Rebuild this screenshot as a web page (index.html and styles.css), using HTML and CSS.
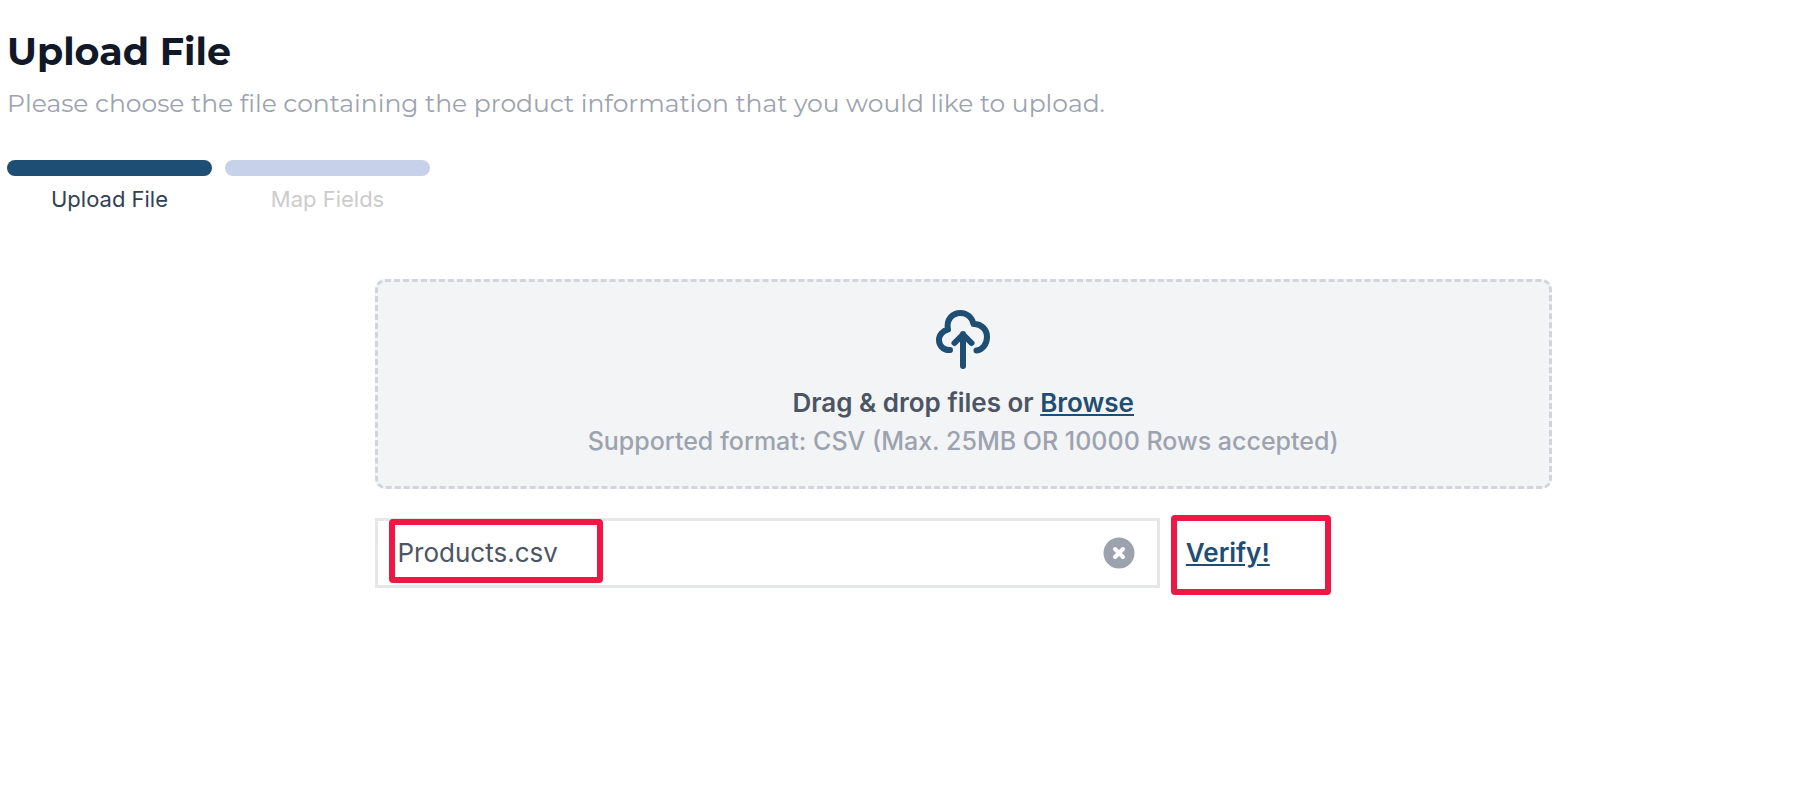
FILE: index.html
```html
<!DOCTYPE html>
<html lang="en">
<head>
    <meta charset="UTF-8">
    <meta name="viewport" content="width=device-width, initial-scale=1.0">
    <title>Upload File</title>
    <link rel="stylesheet" href="styles.css">
</head>
<body>
    <header>
        <h1>Upload File</h1>
        <p class="subtitle">Please choose the file containing the product information that you would like to upload.</p>
    </header>

    <!-- Progress steps -->
    <ol class="steps">
        <li class="step active">Upload File</li>
        <li class="step">Map Fields</li>
    </ol>

    <main class="upload">
        <div class="dropzone">
            <svg class="cloud-icon" viewBox="0 0 54 60" fill="none" stroke="currentColor" stroke-width="6" stroke-linecap="round" stroke-linejoin="round" aria-hidden="true">
                <path d="M14 40C8 40.500 3 36 3 30C3 25 7 20.500 12 19.500C10 10 16 3 24.500 3C31 3 36 7.500 37.500 14C45 13.500 51 19.500 51 27C51 34.500 46 40 40.500 40.500"/>
                <path d="M27 56V24M18.500 33L27 24.500L35.500 33"/>
            </svg>
            <p class="drop-text">Drag &amp; drop files or <a href="#">Browse</a></p>
            <p class="drop-hint">Supported format: CSV (Max. 25MB OR 10000 Rows accepted)</p>
        </div>

        <!-- Selected file -->
        <div class="file-row">
            <div class="file-box">
                <span class="file-name marked">Products.csv</span>
                <button class="clear-btn" type="button" aria-label="Remove file">
                    <svg viewBox="0 0 32 32" aria-hidden="true">
                        <circle cx="16" cy="16" r="15.500" fill="#9ca3af"/>
                        <path d="M12 12L20 20M20 12L12 20" stroke="#fff" stroke-width="4" stroke-linecap="round"/>
                    </svg>
                </button>
            </div>
            <a class="verify-link marked" href="#">Verify!</a>
        </div>
    </main>
</body>
</html>
```

FILE: styles.css
```css
*, *::before, *::after {
    box-sizing: border-box;
}
body {
    margin: 0;
    padding: 26px 7px;
    background-color: #fff;
    font-family: Inter, sans-serif;
    font-size: 26px;
    line-height: 39px;
    color: #4b5563;
}
h1 {
    margin: 0;
    font-family: Montserrat, Inter, sans-serif;
    font-size: 38px;
    font-weight: 700;
    line-height: 52px;
    color: #111827;
}
p {
    margin: 0;
}
a {
    color: #1f4e74;
}
.subtitle {
    margin-top: 6px;
    font-family: Montserrat, Inter, sans-serif;
    font-size: 25px;
    font-weight: 400;
    color: #9ca3af;
}
.steps {
    display: flex;
    gap: 13px;
    margin: 37px 0 0;
    padding: 0;
    list-style: none;
}
.step {
    width: 205px;
    font-size: 22px;
    line-height: 32px;
    text-align: center;
    color: #ccc;
}
.step::before {
    content: "";
    display: block;
    height: 16px;
    margin-bottom: 7px;
    border-radius: 8px;
    background-color: #c7d2ea;
}
.step.active {
    color: #334155;
}
.step.active::before {
    background-color: #1f4e74;
}
.upload {
    width: 66%;
    margin: 64px 0 0 20.6%;
}
.dropzone {
    padding: 28px 20px 25px;
    border: 3px dashed #d1d5db;
    border-radius: 10px;
    background-color: #f3f4f6;
    text-align: center;
}
.cloud-icon {
    display: block;
    width: 54px;
    height: 60px;
    margin: 0 auto 13px;
    color: #1f4e74;
}
.drop-text {
    font-weight: 600;
}
.drop-hint {
    font-size: 25px;
    font-weight: 500;
    color: #9ca3af;
}
.file-row {
    display: flex;
    align-items: center;
    gap: 26px;
    margin-top: 29px;
}
.file-box {
    display: flex;
    justify-content: space-between;
    align-items: center;
    width: 66.7%;
    height: 70px;
    padding: 0 22px 0 20px;
    border: 3px solid #e5e7eb;
}
/* Red outline drawn around the highlighted items */
.marked {
    position: relative;
    line-height: 32px;
}
.marked::after {
    content: "";
    position: absolute;
    border: 6px solid #ee1844;
    border-radius: 4px;
}
.file-name::after {
    top: -18px;
    left: -9px;
    width: 214px;
    height: 64px;
}
.verify-link {
    font-weight: 600;
}
.verify-link::after {
    top: -22px;
    left: -15px;
    width: 160px;
    height: 80px;
}
.clear-btn {
    width: 32px;
    height: 32px;
    padding: 0;
    border: none;
    background: none;
    cursor: pointer;
}
.clear-btn svg {
    display: block;
}
```
